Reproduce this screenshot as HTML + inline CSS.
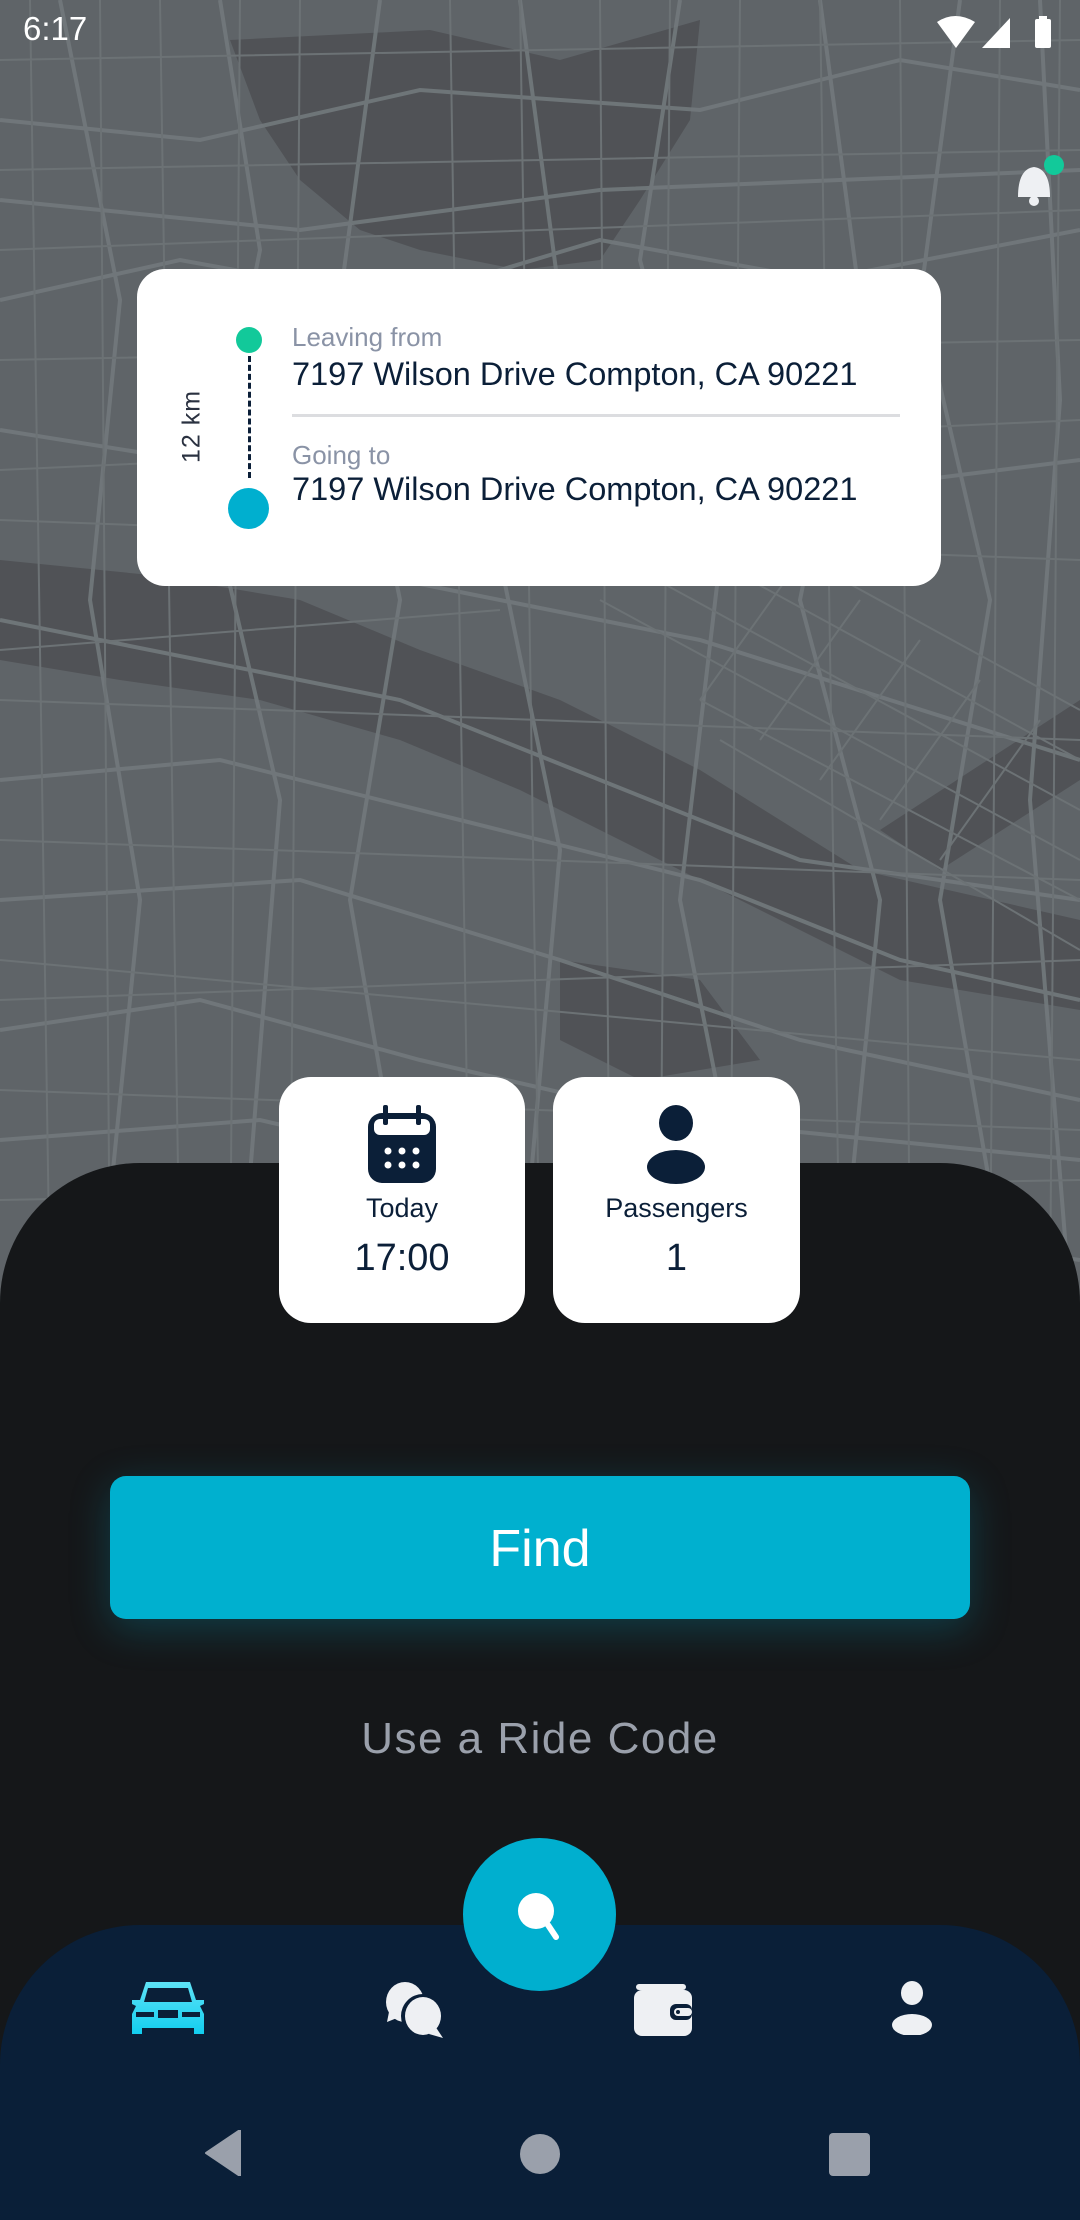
<!DOCTYPE html>
<html><head><meta charset="utf-8">
<style>
*{margin:0;padding:0;box-sizing:border-box}
body{width:1080px;height:2220px;overflow:hidden;background:#151719;font-family:"Liberation Sans",sans-serif;position:relative}
.abs{position:absolute}
</style></head><body>
<svg class="abs" style="left:0;top:0" width="1080" height="1450" viewBox="0 0 1080 1450">
<rect width="1080" height="1450" fill="#5f6468"/>
<g fill="#505256">
<path d="M230 40 L430 30 L560 60 L700 20 L690 120 L640 200 L600 260 L520 270 L420 250 L360 230 L300 180 L260 120Z"/>
<path d="M0 560 L150 575 L300 600 L420 650 L560 700 L700 770 L860 870 L1080 920 L1080 1010 L900 980 L780 920 L640 850 L520 790 L400 740 L260 700 L120 680 L0 660Z"/>
<path d="M560 960 L700 980 L760 1060 L640 1080 L560 1040Z"/>
<path d="M880 830 L1080 700 L1080 780 L940 870Z"/>
</g>
<g stroke="#72797c" stroke-width="4" fill="none" opacity="0.9">
<path d="M0 120 L200 140 L420 90 L700 110 L900 60 L1080 90"/>
<path d="M0 300 L180 260 L400 300 L600 240 L820 280 L1080 230"/>
<path d="M0 430 L250 470 L500 420 L760 500 L1080 460"/>
<path d="M0 780 L220 760 L460 820 L700 880 L900 960 L1080 1000"/>
<path d="M0 900 L300 880 L560 960 L800 1040 L1080 1100"/>
<path d="M0 1030 L200 1000 L420 1060 L680 1120 L1080 1160"/>
<path d="M0 1140 L260 1120 L520 1180 L800 1220 L1080 1260"/>
<path d="M60 0 L120 300 L90 600 L140 900 L100 1300"/>
<path d="M220 0 L260 250 L210 500 L280 800 L240 1300"/>
<path d="M380 0 L340 300 L400 600 L350 900 L420 1300"/>
<path d="M520 0 L560 300 L500 560 L560 850 L520 1300"/>
<path d="M680 0 L640 260 L720 560 L680 900 L760 1300"/>
<path d="M820 0 L860 300 L800 600 L880 900 L840 1300"/>
<path d="M960 0 L920 300 L990 600 L940 900 L1010 1300"/>
<path d="M1040 0 L1060 400 L1030 800 L1070 1300"/>
<path d="M0 620 L400 700 L800 860 L1080 900"/>
<path d="M300 560 L700 640 L1080 760"/>
<path d="M0 200 L300 230 L600 190 L1080 170"/>
</g>
<g stroke="#6c7275" stroke-width="2" fill="none">
<path d="M0 60 L1080 40 M0 170 L1080 150 M0 360 L1080 340 M0 520 L1080 560 M0 700 L1080 740 M0 840 L1080 880 M0 960 L1080 1060 M0 1090 L1080 1130 M0 1200 L1080 1180 M30 0 L50 1300 M160 0 L180 1300 M300 0 L290 1300 M450 0 L470 1300 M600 0 L610 1300 M740 0 L730 1300 M900 0 L910 1300 M1000 0 L990 1300"/>
<path d="M0 250 L1080 210 M0 470 L1080 420 M0 650 L500 610 M0 1000 L1080 960 M100 0 L110 1300 M240 0 L230 1300 M520 0 L540 1300 M670 0 L660 1300 M820 0 L840 1300 M1060 0 L1050 1300"/>
<path d="M600 600 L1080 860 M620 560 L1080 810 M640 520 L1080 760 M660 480 L1080 710 M700 700 L1080 900 M720 740 L1080 950"/>
<path d="M800 560 L700 700 M860 600 L760 740 M920 640 L820 780 M980 680 L880 820 M1040 720 L940 860"/>
</g>
</svg>
<div class="abs" style="left:23px;top:10px;color:#fff;font-size:33px">6:17</div>
<svg class="abs" style="left:935px;top:14px" width="130" height="36" viewBox="0 0 130 36">
<path d="M2 8 Q20 -4 40 8 L21 34Z" fill="#fff"/>
<path d="M47 34 L75 4 L75 34Z" fill="#fff"/>
<rect x="100" y="5" width="16" height="29" rx="2" fill="#fff"/><rect x="104" y="2" width="8" height="4" fill="#fff"/>
</svg>
<svg class="abs" style="left:1010px;top:155px" width="60" height="60" viewBox="0 0 60 60">
<path d="M8 42 Q8 14 24 12 Q40 14 40 42Z" fill="#eef0f3"/>
<circle cx="24" cy="46" r="5" fill="#eef0f3"/>
<circle cx="44" cy="10" r="10" fill="#12c99a"/>
</svg>
<div class="abs" style="left:137px;top:269px;width:804px;height:317px;background:#fff;border-radius:28px"></div>
<div class="abs" style="left:236px;top:327px;width:26px;height:26px;border-radius:50%;background:#12c99a"></div>
<div class="abs" style="left:248px;top:356px;height:122px;border-left:3px dashed #0b1f38"></div>
<div class="abs" style="left:228px;top:488px;width:41px;height:41px;border-radius:50%;background:#00afcf"></div>
<div class="abs" style="left:145px;top:412px;width:94px;text-align:center;transform:rotate(-90deg);color:#2a3140;font-size:25px;letter-spacing:1px">12 km</div>
<div class="abs" style="left:292px;top:322px;color:#8a93a6;font-size:26px">Leaving from</div>
<div class="abs" style="left:292px;top:356px;color:#0b1f38;font-size:32.5px">7197 Wilson Drive Compton, CA 90221</div>
<div class="abs" style="left:292px;top:414px;width:608px;height:3px;background:#dcdde0"></div>
<div class="abs" style="left:292px;top:440px;color:#8a93a6;font-size:26px">Going to</div>
<div class="abs" style="left:292px;top:471px;color:#0b1f38;font-size:32.5px">7197 Wilson Drive Compton, CA 90221</div>
<div class="abs" style="left:0;top:1163px;width:1080px;height:1057px;background:#151719;border-radius:140px 140px 0 0"></div>
<div class="abs" style="left:279px;top:1077px;width:246px;height:246px;background:#fff;border-radius:32px;text-align:center;color:#0b1f38">
<svg style="position:absolute;left:87px;top:28px" width="72" height="80" viewBox="0 0 72 80"><rect x="2" y="8" width="68" height="70" rx="14" fill="#0b1f38"/><rect x="8" y="14" width="56" height="16" rx="6" fill="#fff"/><rect x="17" y="0" width="5" height="20" rx="2" fill="#0b1f38"/><rect x="50" y="0" width="5" height="20" rx="2" fill="#0b1f38"/><g fill="#fff"><circle cx="22" cy="46" r="3.5"/><circle cx="36" cy="46" r="3.5"/><circle cx="50" cy="46" r="3.5"/><circle cx="22" cy="60" r="3.5"/><circle cx="36" cy="60" r="3.5"/><circle cx="50" cy="60" r="3.5"/></g></svg>
<div style="position:absolute;top:116px;width:100%;font-size:27px">Today</div>
<div style="position:absolute;top:160px;width:100%;font-size:38px">17:00</div>
</div>
<div class="abs" style="left:553px;top:1077px;width:247px;height:246px;background:#fff;border-radius:32px;text-align:center;color:#0b1f38">
<svg style="position:absolute;left:93px;top:28px" width="60" height="80" viewBox="0 0 60 80"><ellipse cx="30" cy="18" rx="17" ry="18" fill="#0b1f38"/><ellipse cx="30" cy="62" rx="29" ry="17" fill="#0b1f38"/></svg>
<div style="position:absolute;top:116px;width:100%;font-size:27px">Passengers</div>
<div style="position:absolute;top:160px;width:100%;font-size:38px">1</div>
</div>
<div class="abs" style="left:110px;top:1476px;width:860px;height:143px;background:#00b0cf;border-radius:16px;box-shadow:0 10px 40px rgba(0,176,207,0.25);color:#fff;font-size:52px;text-align:center;line-height:146px">Find</div>
<div class="abs" style="left:0;top:1714px;width:1080px;text-align:center;color:#9aa0ab;font-size:44px;letter-spacing:1.5px">Use a Ride Code</div>
<div class="abs" style="left:0;top:1925px;width:1080px;height:295px;background:#0a1f38;border-radius:140px 140px 0 0"></div>
<div class="abs" style="left:463px;top:1838px;width:153px;height:153px;border-radius:50%;background:#00afcf"></div>
<svg class="abs" style="left:510px;top:1885px" width="60" height="60" viewBox="0 0 60 60"><circle cx="26" cy="26" r="18" fill="#fff"/><path d="M38 40 L46 52" stroke="#fff" stroke-width="6" stroke-linecap="round"/></svg>
<svg class="abs" style="left:128px;top:1980px" width="80" height="56" viewBox="0 0 80 56"><defs><linearGradient id="cg" x1="0" y1="0" x2="0" y2="1"><stop offset="0" stop-color="#5ee3f7"/><stop offset="1" stop-color="#12cdef"/></linearGradient></defs><path d="M18 2 L62 2 L68 20 L76 20 L76 24 L72 26 L76 34 L76 54 L66 54 L66 48 L14 48 L14 54 L4 54 L4 34 L8 26 L4 24 L4 20 L12 20Z" fill="url(#cg)"/><path d="M20 8 L60 8 L64 22 L16 22Z" fill="#0a1f38"/><rect x="8" y="32" width="18" height="5" fill="#0a1f38"/><rect x="54" y="32" width="18" height="5" fill="#0a1f38"/><rect x="30" y="30" width="20" height="8" fill="#0a1f38"/></svg>
<svg class="abs" style="left:385px;top:1982px" width="62" height="56" viewBox="0 0 62 56"><ellipse cx="20" cy="20" rx="19" ry="20" fill="#eef0f3"/><path d="M4 30 L2 40 L12 36Z" fill="#eef0f3"/><ellipse cx="38" cy="34" rx="22" ry="22" fill="#0a1f38"/><ellipse cx="38" cy="34" rx="18" ry="19" fill="#eef0f3"/><path d="M50 44 L58 56 L44 52Z" fill="#eef0f3"/></svg>
<svg class="abs" style="left:634px;top:1984px" width="60" height="52" viewBox="0 0 60 52"><rect x="2" y="0" width="50" height="6" rx="3" fill="#eef0f3"/><rect x="0" y="6" width="58" height="46" rx="8" fill="#eef0f3"/><rect x="36" y="20" width="22" height="16" rx="6" fill="#0a1f38"/><rect x="40" y="24" width="18" height="8" rx="4" fill="#eef0f3"/><circle cx="44" cy="28" r="2" fill="#0a1f38"/></svg>
<svg class="abs" style="left:891px;top:1981px" width="42" height="54" viewBox="0 0 42 54"><ellipse cx="21" cy="12" rx="11" ry="12" fill="#eef0f3"/><ellipse cx="21" cy="44" rx="20" ry="11" fill="#eef0f3"/></svg>
<svg class="abs" style="left:204px;top:2130px" width="40" height="46" viewBox="0 0 40 46"><path d="M36 0 L36 46 L2 23Z" fill="#9aa0ab" stroke="#9aa0ab" stroke-width="2" stroke-linejoin="round"/></svg>
<div class="abs" style="left:520px;top:2134px;width:40px;height:40px;border-radius:50%;background:#9aa0ab"></div>
<div class="abs" style="left:829px;top:2133px;width:41px;height:43px;border-radius:4px;background:#9aa0ab"></div>
</body></html>
